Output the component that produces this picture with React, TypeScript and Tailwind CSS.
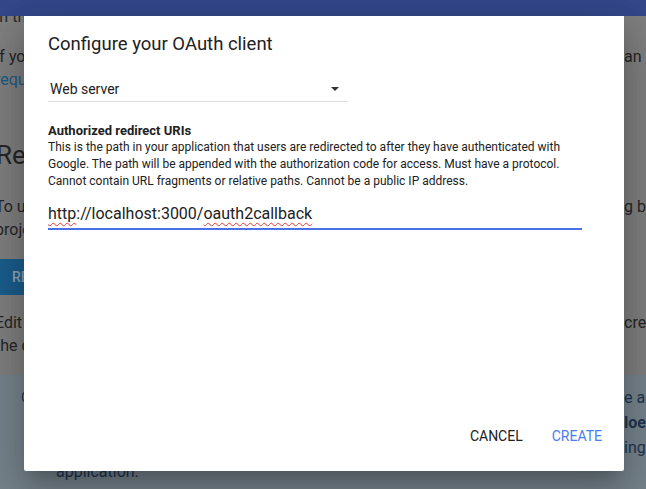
import { Info } from "lucide-react"

function Row({ left, right, className = "" }: { left: React.ReactNode; right?: React.ReactNode; className?: string }) {
  return (
    <div className={`grid grid-cols-[629px_auto] whitespace-nowrap ${className}`}>
      <span>{left}</span>
      <span>{right}</span>
    </div>
  )
}

export default function App() {
  return (
    <div className="relative w-[646px] h-[489px] overflow-hidden bg-[#7f7f7f] font-['Roboto',sans-serif]">
      {/* top app bar */}
      <div className="relative z-10 h-4 bg-[#33478a]" />

      {/* page behind the scrim */}
      <div className="-ml-[5px] w-[720px] text-[16px] text-[#262626]">
        <Row className="-mt-[11px] leading-6" left="In the Google API Console" />

        <div className="mt-4 leading-[23px]">
          <Row left="If you" right="an request" />
          <Row left={<span className="text-[#1d5a86]">request access</span>} />
        </div>

        <h2 className="mt-12 text-[26px] leading-8 pl-[1px]">Register your app</h2>

        <div className="mt-[24px] leading-[23px]">
          <Row left="To use" right="g by" />
          <Row left="project" />
        </div>

        <div className="mt-[18px] ml-[5px] h-9 w-[200px] bg-[#1a5d8c] pl-3 flex items-center text-[14px] font-medium text-[#8fa3b3]">
          REGISTER
        </div>

        <div className="mt-[16px] leading-[23px]">
          <Row left="Edit" right="cre" />
          <Row left="the client" />
        </div>

        <div className="mt-[18px] h-[140px] bg-[#76838c] pt-[10px] leading-[25px] text-[#1f3550]">
          <div className="relative">
            <Info className="absolute left-[26px] top-[4px] h-4 w-4 text-[#2b3b4a]" />
          </div>
          <Row left="" right="e access" />
          <Row left="" right={<span className="font-bold">loes</span>} />
          <Row left="" right="ing" />
          <div className="pl-[61px] leading-[23px]">application.</div>
        </div>
      </div>

      {/* dialog */}
      <div className="absolute left-6 top-4 z-20 flex h-[455px] w-[600px] flex-col rounded-b-[2px] bg-white shadow-[0_11px_15px_-7px_rgba(0,0,0,0.2),0_24px_38px_3px_rgba(0,0,0,0.14),0_9px_46px_8px_rgba(0,0,0,0.12)]">
        <div className="px-6 pt-4">
          <h1 className="text-[18.5px] leading-6 text-[#212121]">Configure your OAuth client</h1>

          <div className="mt-5 flex h-[26px] w-[300px] items-center justify-between border-b border-[#e0e0e0] pl-[2px] pr-[9px]">
            <span className="pt-[1px] text-[14px] text-[#212121]">Web server</span>
            <svg width="8" height="4" viewBox="0 0 8 4" className="text-[#333]">
              <path d="M0 0h8L4 4z" fill="currentColor" />
            </svg>
          </div>

          <div className="mt-5 pt-[1px] text-[13px] font-bold leading-4 text-[#212121]">Authorized redirect URIs</div>
          <p className="text-[12px] leading-[17px] text-[#212121] whitespace-nowrap">
            This is the path in your application that users are redirected to after they have authenticated with
            <br />
            Google. The path will be appended with the authorization code for access. Must have a protocol.
            <br />
            Cannot contain URL fragments or relative paths. Cannot be a public IP address.
          </p>

          <div className="mt-3 w-[534px] border-b-2 border-[#4a72e6] pb-[2px] text-[16px] leading-6 text-[#212121]">
            <span className="underline decoration-wavy decoration-[#e53935] decoration-1 underline-offset-[3px]">http</span>
            ://localhost:3000/
            <span className="underline decoration-wavy decoration-[#e53935] decoration-1 underline-offset-[3px]">oauth2callback</span>
          </div>
        </div>

        <div className="mt-auto flex justify-end gap-[13px] pb-[17px] pr-[14px]">
          <button className="h-9 px-2 text-[14px] text-[#212121]">CANCEL</button>
          <button className="h-9 px-2 text-[14px] text-[#4a7cf2]">CREATE</button>
        </div>
      </div>
    </div>
  )
}
